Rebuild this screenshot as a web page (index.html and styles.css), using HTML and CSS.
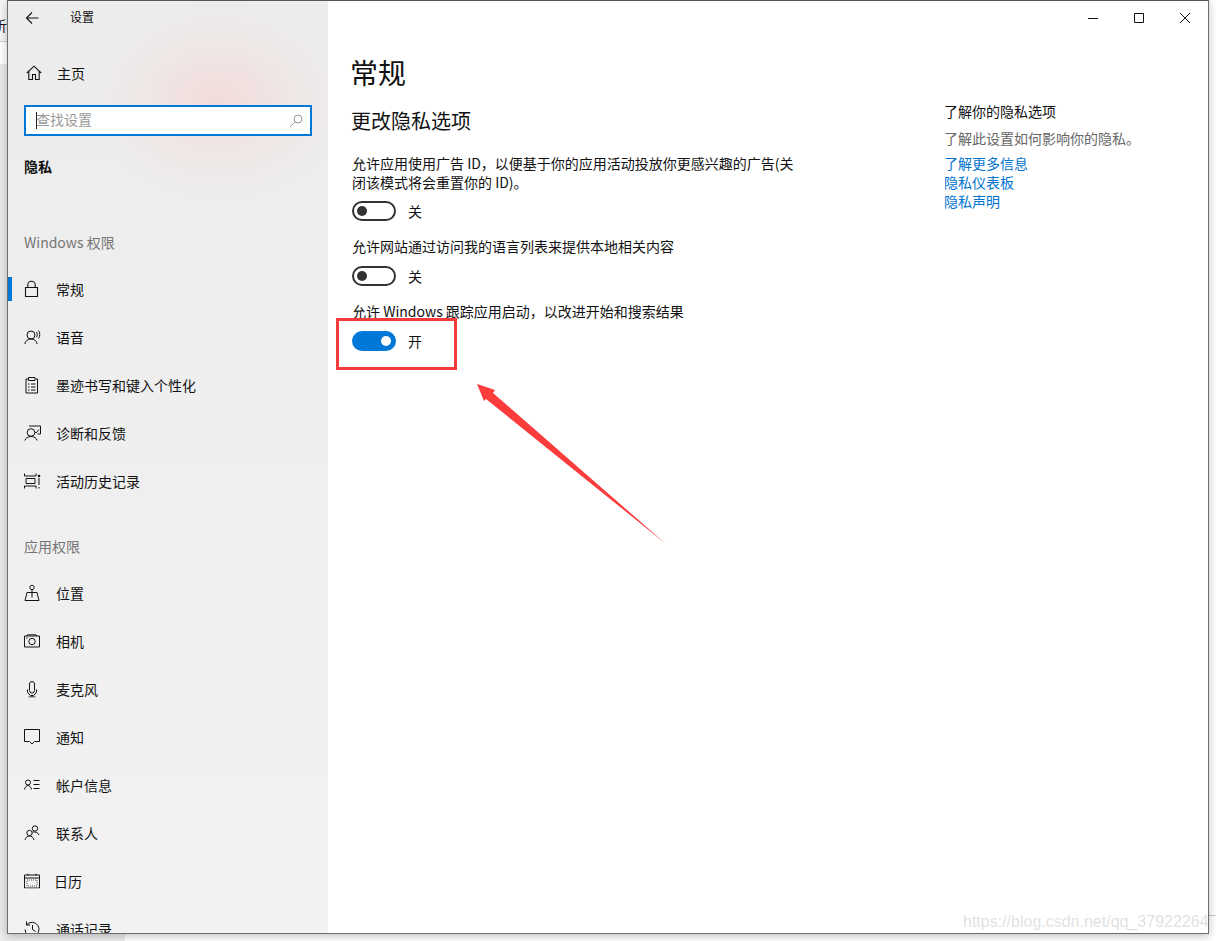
FILE: index.html
```html
<!DOCTYPE html>
<html lang="zh-CN">
<head>
<meta charset="utf-8">
<title>设置</title>
<link rel="stylesheet" href="styles.css">
</head>
<body>
<div class="behind"><span class="behind-text">析</span></div>
<div class="behind-line"></div>
<div class="behind-bottom"></div>
<div class="window">
  <aside class="sidebar">
    <div class="titlebar">
      <svg class="back" width="16" height="16" viewBox="0 0 16 16"><path d="M13.500 8H1.800M7 2.500 1.500 8 7 13.500" fill="none" stroke="#111" stroke-width="1.100"/></svg>
      <span class="title-text">设置</span>
    </div>
    <div class="home">
      <svg class="icon" width="16" height="16" viewBox="0 0 16 16"><path d="M.8 8 8 1.200 15.200 8M2.800 6.500V14.500H6.500V9.500H9.500V14.500H13.200V6.500" fill="none" stroke="#111" stroke-width="1.100"/></svg>
      <span>主页</span>
    </div>
    <div class="search">
      <span class="caret"></span><span class="placeholder">查找设置</span>
      <svg class="search-icon" width="14" height="14" viewBox="0 0 14 14"><circle cx="9" cy="5" r="4" fill="none" stroke="#999"/><path d="M6 8 1 13" stroke="#999" fill="none"/></svg>
    </div>
    <div class="section-title">隐私</div>
    <div class="group-label first">Windows 权限</div>
    <nav class="nav">
      <div class="item active"><svg class="icon" width="16" height="18" viewBox="0 0 16 18"><path d="M1.500 7.500H13.500V16.500H1.500ZM3.800 7.500V5A3.700 3.700 0 0 1 11.200 5V7.500" fill="none" stroke="#111" stroke-width="1.100"/></svg><span>常规</span></div>
      <div class="item"><svg class="icon" width="18" height="16" viewBox="0 0 18 16"><circle cx="7" cy="6" r="4" fill="none" stroke="#111"/><path d="M.8 15C1.500 11.500 4 10 7 10S12.500 11.500 13.200 15M12.500 3C13.500 4 13.500 7 12.500 8.200M14.500 1.500C16.200 3.500 16.200 7.500 14.500 9.500" fill="none" stroke="#111"/></svg><span>语音</span></div>
      <div class="item"><svg class="icon" width="16" height="18" viewBox="0 0 16 18"><path d="M4 3H2V17H13.500V3H11.500M4.500 1.500H11V4.500H4.500ZM4 8H5.500M7 8H11.500M4 11H5.500M7 11H11.500M4 14H5.500M7 14H11.500" fill="none" stroke="#111" stroke-width="1"/></svg><span>墨迹书写和键入个性化</span></div>
      <div class="item"><svg class="icon" width="18" height="16" viewBox="0 0 18 16"><circle cx="7" cy="7.500" r="3.800" fill="none" stroke="#111"/><path d="M.8 15.500C1.500 13 4 11.500 7 11.500S12.500 13 13.200 15.500M5 1H16.500V9H13.500M10.500 6.500 12 8 15 4.500" fill="none" stroke="#111"/></svg><span>诊断和反馈</span></div>
      <div class="item"><svg class="icon" width="18" height="16" viewBox="0 0 18 16"><path d="M.5.500V3H12V.500M2 5.500H11V10.500H2ZM.5 15.500V13H12V15.500M15 5V12M15 14V15.500" fill="none" stroke="#111"/><circle cx="15" cy="3" r="1.300" fill="#111"/></svg><span>活动历史记录</span></div>
    </nav>
    <div class="group-label second">应用权限</div>
    <nav class="nav lower">
      <div class="item"><svg class="icon" width="16" height="17" viewBox="0 0 16 17"><circle cx="8" cy="3" r="2.200" fill="none" stroke="#111"/><path d="M8 5.200V13M3 8H13L15 16H1Z" fill="none" stroke="#111"/></svg><span>位置</span></div>
      <div class="item"><svg class="icon" width="16" height="14" viewBox="0 0 16 14"><path d="M.5 2H15.500V13H.5ZM2.500 2 3.500 .8H12L13 2" fill="none" stroke="#111"/><circle cx="8" cy="7.500" r="3.200" fill="none" stroke="#111"/><path d="M2 4H3.500" stroke="#111"/></svg><span>相机</span></div>
      <div class="item"><svg class="icon" width="16" height="17" viewBox="0 0 16 17"><path d="M5.500 3.500A2.500 2.500 0 0 1 10.500 3.500V10A2.500 2.500 0 0 1 5.500 10ZM3.500 9V10.500A4 4 0 0 0 12.500 10.500V9M8 14.500V16.500M4.500 16.500H11.500" fill="none" stroke="#111"/></svg><span>麦克风</span></div>
      <div class="item"><svg class="icon" width="16" height="16" viewBox="0 0 16 16"><path d="M.5.500H15.500V12.500H10.500L8 15 5.500 12.500H.5Z" fill="none" stroke="#111"/></svg><span>通知</span></div>
      <div class="item"><svg class="icon" width="16" height="12" viewBox="0 0 16 12"><circle cx="4" cy="3.500" r="2.500" fill="none" stroke="#111"/><path d="M.5 10.500C1 8 2.500 6.500 4 6.500S7 8 7.500 10.500M9.500 1.500H15.500M9.500 5.500H15.500M9.500 9.500H15.500" fill="none" stroke="#111"/></svg><span>帐户信息</span></div>
      <div class="item"><svg class="icon" width="16" height="16" viewBox="0 0 16 16"><circle cx="5.500" cy="8" r="2.700" fill="none" stroke="#111"/><circle cx="11" cy="3.500" r="2.700" fill="none" stroke="#111"/><path d="M1 15C1.500 12.500 3.500 11 5.500 11S9.500 12.500 10 15M8.500 7C11 6.500 14 7.500 15 10" fill="none" stroke="#111"/></svg><span>联系人</span></div>
      <div class="item narrow"><svg class="icon" width="16" height="15" viewBox="0 0 16 15"><path d="M.5 1.500H15.500V14.500H.5ZM.5 4.500H15.500" fill="none" stroke="#111"/><path d="M3 6.500H13V12.500H3Z" fill="none" stroke="#555" stroke-dasharray="1 1"/><path d="M4 0V2M12 0V2" stroke="#111"/></svg><span>日历</span></div>
      <div class="item"><svg class="icon" width="16" height="16" viewBox="0 0 16 16"><path d="M2.500 4A7 7 0 1 1 1 8.500M2.500 .5V4H6M8.500 4V8.500L11.500 10.500" fill="none" stroke="#111"/></svg><span>通话记录</span></div>
    </nav>
  </aside>
  <main class="content">
    <div class="window-controls">
      <svg width="10" height="10" viewBox="0 0 10 10"><path d="M0 5.500H10" stroke="#111"/></svg>
      <svg width="10" height="10" viewBox="0 0 10 10"><path d="M.5.500H9.500V9.500H.5Z" fill="none" stroke="#111"/></svg>
      <svg width="10" height="10" viewBox="0 0 10 10"><path d="M0 0 10 10M10 0 0 10" stroke="#111" fill="none"/></svg>
    </div>
    <div class="columns">
      <div class="main-col">
        <h1>常规</h1>
        <h2>更改隐私选项</h2>
        <p class="opt long">允许应用使用广告 ID，以便基于你的应用活动投放你更感兴趣的广告(关闭该模式将会重置你的 ID)。</p>
        <div class="toggle-row"><span class="toggle"><span class="knob"></span></span><span>关</span></div>
        <p class="opt">允许网站通过访问我的语言列表来提供本地相关内容</p>
        <div class="toggle-row"><span class="toggle"><span class="knob"></span></span><span>关</span></div>
        <p class="opt">允许 Windows 跟踪应用启动，以改进开始和搜索结果</p>
        <div class="toggle-row"><span class="toggle on"><span class="knob"></span></span><span>开</span></div>
      </div>
      <div class="side-col">
        <div class="side-title">了解你的隐私选项</div>
        <div class="side-desc">了解此设置如何影响你的隐私。</div>
        <a class="link">了解更多信息</a>
        <a class="link">隐私仪表板</a>
        <a class="link">隐私声明</a>
      </div>
    </div>
  </main>
</div>
<div class="red-box"></div>
<svg class="arrow" width="200" height="170" viewBox="0 0 200 170"><polygon points="7,4 25,10 23,13 196,164 16,19 14,21" fill="#fa3c3c"/></svg>
<div class="watermark">https://blog.csdn.net/qq_37922264</div>
</body>
</html>
```
FILE: styles.css
```css
html, body {
  margin: 0;
  padding: 0;
  width: 1216px;
  height: 941px;
  overflow: hidden;
}
body {
  position: relative;
  background: #fff;
  font-family: "Noto Sans CJK SC", "Noto Sans", sans-serif;
  font-size: 14px;
  color: #111;
}
.behind {
  position: absolute;
  left: 0;
  top: 0;
  width: 7px;
  height: 941px;
  overflow: hidden;
  background: linear-gradient(#f5f5f5 0, #f5f5f5 41px, #ccc 41px, #ccc 42px, #fff 42px, #fff 64px, #e9e9e9 64px);
}
.behind-text {
  position: absolute;
  left: -7px;
  top: 15px;
  font-size: 14px;
  line-height: 20px;
}
.behind-line {
  position: absolute;
  left: 1208px;
  top: 915px;
  width: 8px;
  height: 1px;
  background: #c8c8c8;
}
.behind-bottom {
  position: absolute;
  left: 0;
  top: 933px;
  width: 125px;
  height: 8px;
  background: #ececec;
}
.window {
  position: absolute;
  left: 7px;
  top: 0;
  width: 1200px;
  height: 932px;
  display: flex;
  border: 1px solid #6e6e6e;
  border-top-color: #555;
  background: #fff;
  box-shadow: 0 2px 8px rgba(0, 0, 0, .25);
  overflow: hidden;
}
.sidebar {
  width: 320px;
  flex: none;
  background:
    radial-gradient(ellipse 130px 100px at 210px 100px, rgba(246, 208, 205, .6), rgba(246, 214, 212, .25) 55%, rgba(246, 220, 218, 0)),
    linear-gradient(#ececec, #f2f2f2);
  overflow: hidden;
}
.titlebar {
  height: 33px;
  display: flex;
  align-items: center;
  padding-left: 17px;
  font-size: 12px;
}
.back { margin-right: 29px; }
.title-text {
  line-height: 33px;
  margin-top: -2px;
}
.home {
  height: 48px;
  margin-top: 15px;
  display: flex;
  align-items: center;
  padding-left: 18px;
  gap: 15px;
}
.home .icon { margin: 0; }
.search {
  position: relative;
  height: 27px;
  margin: 8px 16px 0;
  width: 274px;
  border: 2px solid #0078d7;
  background: #fff;
  display: flex;
  align-items: center;
  padding-left: 10px;
  color: #9a9a9a;
}
.caret {
  width: 1px;
  height: 17px;
  background: #222;
  margin-right: -1px;
}
.placeholder {
  line-height: 20px;
  padding-bottom: 3px;
}
.search-icon {
  position: absolute;
  right: 7px;
  top: 7px;
}
.section-title {
  margin: 17px 0 0 16px;
  height: 27px;
  line-height: 27px;
  font-weight: 700;
  font-size: 14px;
}
.group-label {
  height: 20px;
  line-height: 20px;
  padding-left: 16px;
  color: #757575;
}
.group-label.first { margin-top: 52px; }
.group-label.second { margin-top: 31px; }
.nav { margin-top: 13px; }
.item {
  height: 48px;
  display: flex;
  align-items: center;
  position: relative;
  padding-left: 16px;
}
.item .icon {
  position: absolute;
  left: 16px;
  top: 50%;
  transform: translateY(-50%);
}
.item span { margin-left: 32px; }
.item.narrow span { margin-left: 30px; }
.item.active::before {
  content: "";
  position: absolute;
  left: 0;
  top: 12px;
  width: 4px;
  height: 24px;
  background: #0078d7;
}
.content {
  flex: 1;
  position: relative;
  background: #fff;
}
.window-controls {
  height: 33px;
  display: flex;
  justify-content: flex-end;
  align-items: center;
  gap: 36px;
  padding-right: 18px;
}
.columns {
  display: flex;
  padding-left: 24px;
}
.main-col { width: 592px; }
.side-col {
  padding-top: 67px;
  display: flex;
  flex-direction: column;
  align-items: flex-start;
}
h1 {
  margin: 17px 0 0 -2px;
  font-size: 28px;
  line-height: 42px;
  font-weight: 400;
  color: #111;
}
h2 {
  margin: 13px 0 0 -1px;
  font-size: 20px;
  line-height: 30px;
  font-weight: 400;
}
.opt {
  margin: 16px 0 0;
  width: 446px;
  font-size: 14px;
  line-height: 19px;
}
.opt.long {
  margin-top: 18px;
  margin-bottom: -1px;
}
.toggle-row {
  display: flex;
  align-items: center;
  gap: 12px;
  height: 20px;
  margin-top: 10px;
}
.toggle {
  box-sizing: border-box;
  width: 44px;
  height: 20px;
  border: 2px solid #333;
  border-radius: 10px;
  display: flex;
  align-items: center;
  padding: 0 3px;
}
.knob {
  width: 10px;
  height: 10px;
  border-radius: 50%;
  background: #333;
}
.toggle.on {
  background: #0078d7;
  border-color: #0078d7;
  justify-content: flex-end;
}
.toggle.on .knob { background: #fff; }
.side-title {
  line-height: 20px;
  color: #111;
}
.side-desc {
  margin-top: 7px;
  line-height: 20px;
  color: #666;
}
.link {
  color: #0073cf;
  line-height: 19px;
}
.side-desc + .link { margin-top: 6px; }
.red-box {
  position: absolute;
  left: 336px;
  top: 318px;
  width: 115px;
  height: 46px;
  border: 3px solid #f43c3c;
}
.arrow {
  position: absolute;
  left: 470px;
  top: 380px;
}
.watermark {
  position: absolute;
  left: 963px;
  top: 911px;
  font-family: "Liberation Sans", sans-serif;
  font-size: 16px;
  line-height: 22px;
  color: rgba(130, 130, 130, .25);
  white-space: nowrap;
}
```
